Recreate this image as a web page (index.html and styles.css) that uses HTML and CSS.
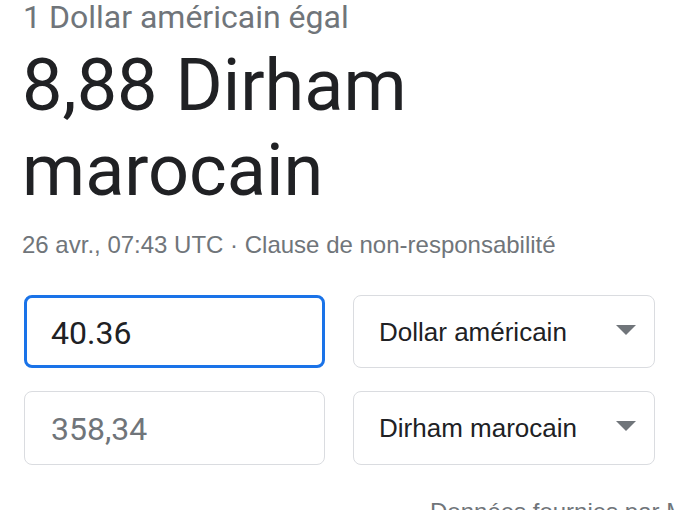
FILE: index.html
```html
<!DOCTYPE html>
<html lang="fr">
<head>
<meta charset="utf-8">
<title>Convertisseur de devises</title>
<link rel="stylesheet" href="styles.css">
</head>
<body>
<main class="card">
  <div class="equal">1 Dollar américain égal</div>
  <div class="result">8,88 Dirham marocain</div>
  <div class="meta">26 avr., 07:43 UTC · Clause de non-responsabilité</div>
  <div class="grid">
    <div class="field field-active"><span class="value">40.36</span></div>
    <div class="select"><span class="label">Dollar américain</span><span class="arrow"></span></div>
    <div class="field"><span class="value muted">358,34</span></div>
    <div class="select"><span class="label">Dirham marocain</span><span class="arrow"></span></div>
  </div>
  <div class="source">Données fournies par Morningstar pour les devises</div>
</main>
</body>
</html>
```
FILE: styles.css
```css
html { overflow: hidden; }
body {
  margin: 0;
  background: #fff;
}
.card {
  padding-left: 22px;
  width: 634px;
}
.equal {
  font-family: Roboto, "Liberation Sans", sans-serif;
  font-size: 32px;
  line-height: 34px;
  color: #70757a;
  padding-left: 1px;
}
.result {
  margin-top: 9px;
  font-family: Roboto, "Liberation Sans", sans-serif;
  font-size: 72px;
  line-height: 85px;
  color: #202124;
  width: 420px;
}
.meta {
  margin-top: 16px;
  font-family: "Liberation Sans", Arial, sans-serif;
  font-size: 24px;
  line-height: 32px;
  color: #70757a;
}
.grid {
  margin-top: 34px;
  margin-left: 2px;
  display: grid;
  grid-template-columns: 301px 302px;
  grid-template-rows: 73px 74px;
  column-gap: 28px;
  row-gap: 23px;
}
.field, .select {
  box-sizing: border-box;
  border: 1px solid #dadce0;
  border-radius: 8px;
  display: flex;
  align-items: center;
}
.field { padding-left: 26px; }
.field-active {
  border: 3px solid #1a73e8;
  padding-left: 24px;
}
.value {
  font-family: Roboto, "Liberation Sans", sans-serif;
  font-size: 32px;
  color: #202124;
  padding-top: 2px;
}
.value.muted { color: #70757a; }
.select {
  padding-left: 25px;
  padding-right: 18px;
  justify-content: space-between;
}
.label {
  font-family: "Liberation Sans", Arial, sans-serif;
  font-size: 26px;
  color: #202124;
  padding-top: 1px;
}
.arrow {
  width: 0;
  height: 0;
  border-left: 10px solid transparent;
  border-right: 10px solid transparent;
  border-top: 10px solid #70757a;
  margin-top: -4px;
}
.source {
  margin-top: 31px;
  padding-left: 408px;
  white-space: nowrap;
  font-family: "Liberation Sans", Arial, sans-serif;
  font-size: 24px;
  line-height: 32px;
  color: #70757a;
}
```
